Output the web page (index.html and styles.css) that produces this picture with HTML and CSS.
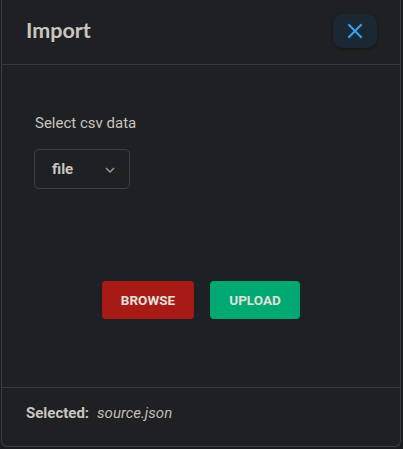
FILE: index.html
```html
<!DOCTYPE html>
<html>
<head>
<meta charset="utf-8">
<link rel="stylesheet" href="styles.css">
</head>
<body>
<div class="modal">
  <div class="modal-header">
    <h2 class="title">Import</h2>
    <button class="close-btn" aria-label="Close">
      <svg width="16" height="16" viewBox="0 0 16 16"><path d="M2 2 L14 14 M14 2 L2 14" stroke="#3a9ff0" stroke-width="2" fill="none" stroke-linecap="square"/></svg>
    </button>
  </div>
  <div class="modal-body">
    <div class="field-label">Select csv data</div>
    <div class="select">
      <span class="select-value">file</span>
      <svg class="chevron" width="10" height="6" viewBox="0 0 10 6"><path d="M1 1 L5 5 L9 1" stroke="#9a978f" stroke-width="1.5" fill="none"/></svg>
    </div>
    <div class="actions">
      <button class="btn btn-red">BROWSE</button>
      <button class="btn btn-green">UPLOAD</button>
    </div>
  </div>
  <div class="modal-footer">
    <span class="sel-label">Selected:</span>
    <span class="sel-file">source.json</span>
  </div>
</div>
</body>
</html>
```
FILE: styles.css
```css
html, body {
  margin: 0;
  padding: 0;
  background: #1b1c1f;
  height: 449px;
  overflow: hidden;
}
.modal {
  margin-left: 1px;
  width: 400px;
  height: 447px;
  box-sizing: border-box;
  background: #1f2023;
  border: 1px solid #3a3b3e;
  border-top: none;
  border-radius: 0 0 6px 6px;
  display: flex;
  flex-direction: column;
  font-family: Roboto, "Liberation Sans", sans-serif;
  color: #c8c5bf;
}
.modal-header {
  height: 65px;
  box-sizing: border-box;
  border-bottom: 1px solid #3a3b3e;
  display: flex;
  align-items: center;
  justify-content: space-between;
  padding: 0 23px 0 24px;
}
.title {
  margin: 0;
  font-family: Lato, "Noto Sans", sans-serif;
  font-weight: 700;
  font-size: 21.5px;
  color: #c9c6bf;
  position: relative;
  top: -2px;
}
.close-btn {
  width: 44px;
  height: 34px;
  border: none;
  border-radius: 10px;
  background: #1b2834;
  display: flex;
  align-items: center;
  justify-content: center;
  padding: 0;
  position: relative;
  top: -1px;
  box-shadow: 0 1px 3px rgba(0,0,0,0.35);
}
.modal-body {
  flex: 1;
  padding: 48px 0 0 32px;
  display: flex;
  flex-direction: column;
}
.field-label {
  font-size: 15px;
  line-height: 20px;
  margin-left: 1px;
  color: #c8c5bf;
}
.select {
  margin-top: 16px;
  width: 96px;
  height: 40px;
  box-sizing: border-box;
  border: 1px solid #3d3e42;
  border-radius: 5px;
  display: flex;
  align-items: center;
  justify-content: space-between;
  padding: 0 14px 0 17px;
}
.select-value {
  font-weight: 700;
  font-size: 15px;
  color: #c9c6bf;
}
.chevron {
  margin-top: 1px;
}
.actions {
  margin-top: 92px;
  margin-left: -32px;
  display: flex;
  justify-content: center;
  gap: 16px;
}
.btn {
  height: 38px;
  border: none;
  border-radius: 4px;
  font-family: Roboto, "Liberation Sans", sans-serif;
  font-weight: 700;
  font-size: 13.5px;
  color: #e2e0dc;
  padding: 0;
}
.btn-red {
  width: 92px;
  background: #a81a16;
}
.btn-green {
  width: 90px;
  background: #00a872;
}
.modal-footer {
  height: 59px;
  box-sizing: border-box;
  border-top: 1px solid #3a3b3e;
  display: flex;
  align-items: center;
  padding: 0 0 8px 24px;
  font-size: 15px;
}
.sel-label {
  font-weight: 700;
  color: #c9c6bf;
}
.sel-file {
  font-style: italic;
  margin-left: 8px;
  color: #c0bdb6;
}
```
